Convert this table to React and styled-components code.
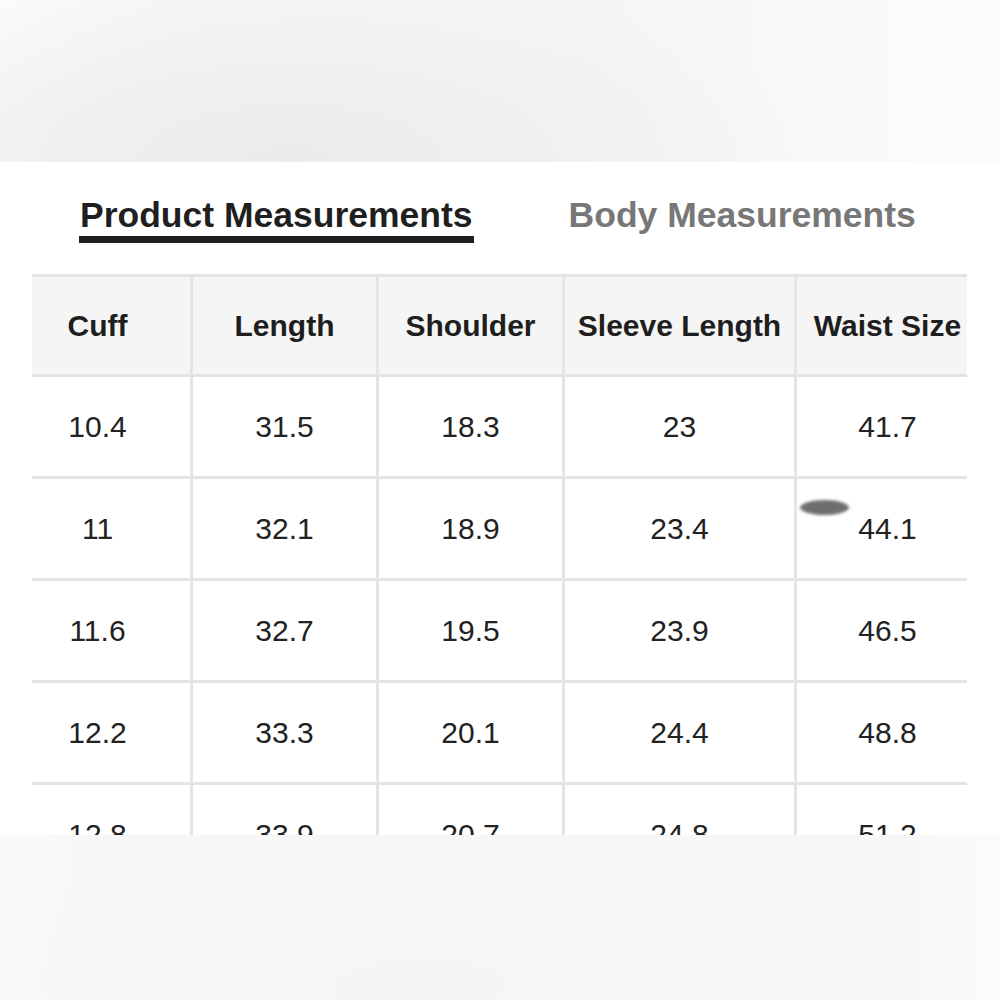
import React from 'react';
import styled, { createGlobalStyle } from 'styled-components';

const GlobalStyle = createGlobalStyle`
  html, body {
    margin: 0;
    padding: 0;
    background: #ffffff;
  }
  body {
    font-family: "Liberation Sans", Arial, Helvetica, sans-serif;
    color: #222;
  }
`;

const columns = ['Cuff', 'Length', 'Shoulder', 'Sleeve Length', 'Waist Size'];
const widths = [188, 186, 186, 232, 184];

const rows = [
  ['10.4', '31.5', '18.3', '23', '41.7'],
  ['11', '32.1', '18.9', '23.4', '44.1'],
  ['11.6', '32.7', '19.5', '23.9', '46.5'],
  ['12.2', '33.3', '20.1', '24.4', '48.8'],
  ['12.8', '33.9', '20.7', '24.8', '51.2'],
];

const App = () => {
  return (
    <>
      <GlobalStyle />
      <Page>
        <TopBand />
        <Card>
          <Tabs>
            <Tab active>Product Measurements</Tab>
            <Tab>Body Measurements</Tab>
          </Tabs>
          <Viewport>
            <Grid $cols={widths}>
              {columns.map(c => (
                <HeadCell key={c}>{c}</HeadCell>
              ))}
              {rows.map((r, i) =>
                r.map((v, j) => (
                  <Cell key={`${i}-${j}`}>
                    {i === 1 && j === 4 && <Smudge />}
                    {v}
                  </Cell>
                ))
              )}
            </Grid>
          </Viewport>
        </Card>
        <BottomBand />
      </Page>
    </>
  );
};

const Page = styled.div`
  width: 1000px;
  height: 1000px;
  display: flex;
  flex-direction: column;
  overflow: hidden;
`;

const TopBand = styled.div`
  height: 162px;
  flex-shrink: 0;
  background:
    radial-gradient(ellipse 520px 190px at 290px 160px, #ebebeb 0%, #f0f0f0 45%, rgba(248,248,248,0) 100%),
    linear-gradient(90deg, #fbfbfb 0%, #f6f6f6 20%, #f5f5f5 60%, #fcfcfc 100%);
`;

const BottomBand = styled.div`
  height: 165px;
  flex-shrink: 0;
  background:
    radial-gradient(ellipse 500px 160px at 420px 150px, #f5f5f5 0%, rgba(247,247,247,0) 100%),
    linear-gradient(90deg, #fafafa 0%, #f7f7f7 10%, #f7f7f7 90%, #fbfbfb 100%);
`;

const Card = styled.div`
  height: 673px;
  flex-shrink: 0;
  background: #fff;
  overflow: hidden;
`;

const Tabs = styled.div`
  display: flex;
  align-items: flex-start;
  gap: 94px;
  padding: 32px 0 0 79px;
`;

const Tab = styled.div`
  font-size: 35.5px;
  line-height: 42px;
  font-weight: 700;
  color: ${p => (p.active ? '#1f1f1f' : '#777')};
  border-bottom: 7px solid ${p => (p.active ? '#1f1f1f' : 'transparent')};
  padding: 0 1px;
`;

const Viewport = styled.div`
  margin: 31px 0 0 32px;
  width: 935px;
  overflow: hidden;
`;

const Grid = styled.div`
  display: grid;
  grid-template-columns: ${p => p.$cols.map(w => `${w}px`).join(' ')};
  margin-left: -27px;
  width: max-content;
  border-top: 3px solid #e4e4e4;
`;

const BaseCell = styled.div`
  position: relative;
  box-sizing: border-box;
  display: flex;
  align-items: center;
  justify-content: center;
  border-right: 3px solid #e4e4e4;
  border-bottom: 3px solid #e4e4e4;
  font-size: 30px;
  color: #222;
  white-space: nowrap;
`;

const HeadCell = styled(BaseCell)`
  height: 100px;
  background: #f5f5f5;
  font-weight: 700;
  color: #1e1e1e;
`;

const Cell = styled(BaseCell)`
  height: 102px;
  background: #fff;
  font-weight: 400;
`;

const Smudge = styled.span`
  position: absolute;
  left: 3px;
  top: 21px;
  width: 49px;
  height: 15px;
  border-radius: 50%;
  background: #6e6e6e;
  filter: blur(1.5px);
`;

export default App;
